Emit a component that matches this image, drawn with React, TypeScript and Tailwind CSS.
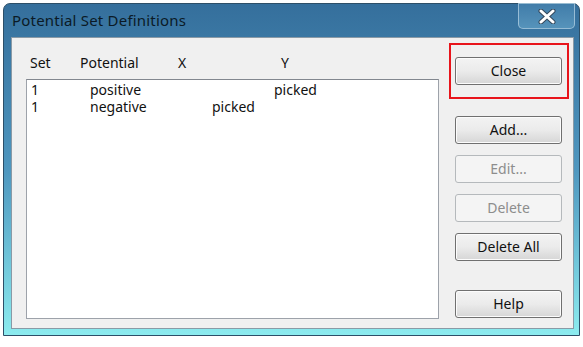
import React from "react";

const rows = [
  { set: "1", potential: "positive", x: "", y: "picked" },
  { set: "1", potential: "negative", x: "picked", y: "" },
];

const DlgButton: React.FC<{ label: string; disabled?: boolean; className?: string }> = ({
  label,
  disabled,
  className,
}) => (
  <button
    disabled={disabled}
    className={
      "h-[28px] w-[107px] rounded-[3px] border text-[14px] leading-none " +
      (disabled
        ? "border-[#b5b9bc] bg-[#f4f4f4] text-[#8d8d8d] "
        : "border-[#707070] bg-gradient-to-b from-[#f3f3f3] via-[#ebebeb] to-[#d6d6d6] text-[#111] shadow-[inset_0_0_0_1px_#fcfcfc] ") +
      (className ?? "")
    }
  >
    {label}
  </button>
);

export default function App() {
  return (
    <div
      className="h-[347px] w-[583px] overflow-hidden bg-white pl-[3px] pt-[3px]"
      style={{ fontFamily: '"Noto Sans", "Open Sans", sans-serif' }}
    >
      {/* window frame */}
      <div className="relative flex h-[333px] w-[577px] flex-col rounded-t-[7px] border border-[#2d4f68] bg-gradient-to-b from-[#356f9c] via-[#4f97bf] to-[#8cecef]">
        {/* title bar */}
        <div className="flex h-[33px] items-center pl-[8px]">
          <span className="text-[15px] tracking-[0.2px] text-[#0b1a26]">Potential Set Definitions</span>
        </div>
        <div className="absolute right-[4px] top-[-1px] flex h-[26px] w-[57px] items-center justify-center rounded-b-[5px] border border-[#b9d4e6]/70 bg-gradient-to-b from-[#4a86b2]/60 to-[#6aa8cc]/60">
          <svg width="18" height="15" viewBox="0 0 18 15">
            <path
              d="M3 2 L15 13 M15 2 L3 13"
              stroke="#33475a"
              strokeWidth="5"
              strokeLinecap="round"
            />
            <path
              d="M3 2 L15 13 M15 2 L3 13"
              stroke="#ffffff"
              strokeWidth="3"
              strokeLinecap="round"
            />
          </svg>
        </div>

        {/* client area */}
        <div className="relative ml-[7px] mr-[5px] flex h-[292px] border border-[#8a9aa6] bg-[#f0f0f0] pl-[14px] pr-[10px] text-[14px] text-[#111]">
          <div className="flex flex-col">
            <div className="flex h-[41px] items-center pt-[8px]">
              <span className="ml-[4px] w-[50px]">Set</span>
              <span className="w-[98px]">Potential</span>
              <span className="w-[103px]">X</span>
              <span>Y</span>
            </div>
            <div className="h-[240px] w-[413px] border border-[#9da2aa] border-t-[#82878f] bg-white pt-[1px]">
              {rows.map((r, i) => (
                <div
                  key={i}
                  className="grid h-[17px] grid-cols-[59px_122px_62px_1fr] items-center pl-[4px] text-[14px] leading-[17px]"
                >
                  <span>{r.set}</span>
                  <span>{r.potential}</span>
                  <span>{r.x}</span>
                  <span>{r.y}</span>
                </div>
              ))}
            </div>
          </div>

          <div className="ml-[16px] flex flex-col pt-[19px]">
            <DlgButton label="Close" />
            <DlgButton label="Add..." className="mt-[31px]" />
            <DlgButton label="Edit..." disabled className="mt-[11px]" />
            <DlgButton label="Delete" disabled className="mt-[11px]" />
            <DlgButton label="Delete All" className="mt-[11px]" />
            <DlgButton label="Help" className="mt-[29px]" />
          </div>

          {/* annotation box */}
          <div className="absolute left-[437px] top-[5px] h-[56px] w-[120px] border-2 border-[#e8141b]" />
        </div>
      </div>
    </div>
  );
}
